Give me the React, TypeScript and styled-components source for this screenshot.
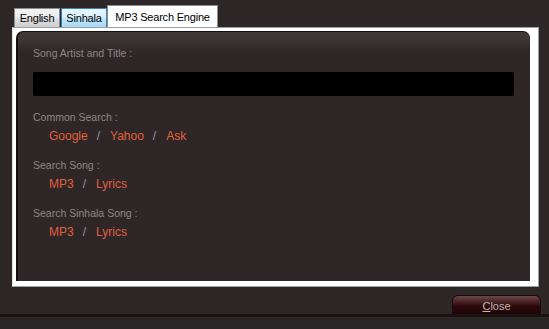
import React from 'react';
import styled, {createGlobalStyle} from "styled-components";

const GlobalStyle = createGlobalStyle`
  html, body {
    margin: 0;
    padding: 0;
    background: #2e2728;
  }
`

type TabKind = 'plain' | 'hover' | 'active'

const tabs: { label: string, kind: TabKind, width: number }[] = [
    {label: 'English', kind: 'plain', width: 46},
    {label: 'Sinhala', kind: 'hover', width: 46},
    {label: 'MP3 Search Engine', kind: 'active', width: 111},
]

type SearchGroup = {
    title: string
    links: string[]
}

const groups: SearchGroup[] = [
    {title: 'Common Search :', links: ['Google', 'Yahoo', 'Ask']},
    {title: 'Search Song :', links: ['MP3', 'Lyrics']},
    {title: 'Search Sinhala Song :', links: ['MP3', 'Lyrics']},
]

const App = () => {
    return (
        <Window>
            <GlobalStyle/>
            <TabStrip>
                {tabs.map(t => <Tab key={t.label} kind={t.kind} w={t.width}>{t.label}</Tab>)}
            </TabStrip>
            <Panel>
                <Inner>
                    <Label>Song Artist and Title :</Label>
                    <SearchInput type="text"/>
                    {groups.map(g => (
                        <Group key={g.title}>
                            <Label>{g.title}</Label>
                            <LinkRow>
                                {g.links.map((l, i) => (
                                    <React.Fragment key={l}>
                                        {i > 0 && <Slash>/</Slash>}
                                        <SearchLink href={'#'}>{l}</SearchLink>
                                    </React.Fragment>
                                ))}
                            </LinkRow>
                        </Group>
                    ))}
                </Inner>
            </Panel>
            <Footer>
                <CloseButton><u>C</u>lose</CloseButton>
            </Footer>
            <BottomBar/>
        </Window>
    );
};

export default App;

const Window = styled.div`
  width: 549px;
  height: 329px;
  display: flex;
  flex-direction: column;
  background: #2e2728;
  font-family: "Liberation Sans", Arial, sans-serif;
  overflow: hidden;
`

const TabStrip = styled.div`
  height: 27px;
  padding-left: 14px;
  display: flex;
  align-items: flex-end;
`

const Tab = styled.div<{ kind: TabKind, w: number }>`
  box-sizing: border-box;
  width: ${p => p.w}px;
  height: ${p => p.kind === 'active' ? 22 : 19}px;
  margin-left: ${p => p.kind === 'hover' ? 1 : 0}px;
  display: flex;
  align-items: center;
  justify-content: center;
  font-size: 11px;
  letter-spacing: -0.2px;
  color: #000;
  border: 1px solid ${p => p.kind === 'hover' ? '#3c7fb1' : '#898c95'};
  border-bottom: none;
  background: ${p => p.kind === 'active'
          ? '#fff'
          : p.kind === 'hover'
                  ? 'linear-gradient(#eaf6fd, #d9f0fc 45%, #bee6fd 55%, #a7d9f5)'
                  : 'linear-gradient(#f2f2f2, #ebebeb 45%, #dddddd 55%, #cfcfcf)'};
`

const Panel = styled.div`
  margin: 0 10px 0 12px;
  height: 260px;
  box-sizing: border-box;
  background: #fff;
  border: 1px solid #9a9ea6;
  border-left-color: #e4e4e4;
  padding: 3px 8px 5px 3px;
  display: flex;
`

const Inner = styled.div`
  flex: 1;
  box-sizing: border-box;
  border-top: 1px solid #141010;
  border-left: 2px solid #141010;
  border-radius: 7px 7px 0 0;
  background: linear-gradient(#403a3b, #3a3435 8px, #322b2c 16px, #2e2627 22px);
  padding: 14px 16px 0 15px;
  display: flex;
  flex-direction: column;
`

const Label = styled.div`
  font-size: 10.5px;
  line-height: 14px;
  color: #8f8788;
`

const SearchInput = styled.input`
  margin-top: 12px;
  height: 24px;
  box-sizing: border-box;
  border: none;
  border-radius: 2px;
  background: #000;
  outline: none;
`

const Group = styled.div`
  margin-top: 14px;

  &:first-of-type {
    margin-top: 15px;
  }
`

const LinkRow = styled.div`
  margin-top: 4px;
  padding-left: 16px;
  display: flex;
  align-items: center;
  line-height: 16px;
  font-size: 12px;
`

const SearchLink = styled.a`
  color: #e2603b;
  text-decoration: none;
`

const Slash = styled.span`
  margin: 0 10px 0 9px;
  color: #8a97aa;
`

const Footer = styled.div`
  display: flex;
  justify-content: flex-end;
  padding: 8px 8px 0 0;
  height: 19px;
`

const CloseButton = styled.button`
  width: 89px;
  height: 19px;
  box-sizing: border-box;
  border: 1px solid #1a0c0c;
  border-bottom: none;
  border-radius: 6px 6px 0 0;
  background: linear-gradient(#6a4649, #4a2629 30%, #2e0a0c 55%, #200406);
  color: #c6b4b6;
  font-family: "Liberation Sans", Arial, sans-serif;
  font-size: 11px;
  padding: 2px 0 0;
  cursor: pointer;

  u {
    text-decoration: underline;
  }
`

const BottomBar = styled.div`
  flex: 1;
  border-top: 3px solid #161314;
  box-shadow: inset 0 1px 0 #3a2323;
  background: #2a2526;
`
